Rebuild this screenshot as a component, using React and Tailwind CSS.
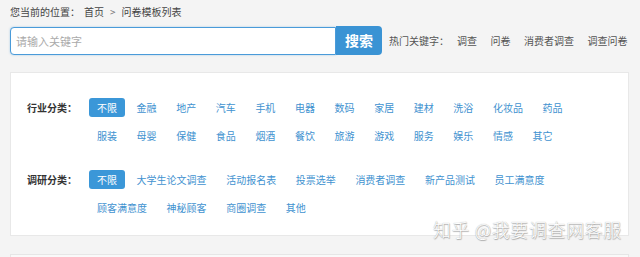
import React from "react";

const industry = [
  "金融", "地产", "汽车", "手机", "电器", "数码", "家居", "建材", "洗浴", "化妆品", "药品",
  "服装", "母婴", "保健", "食品", "烟酒", "餐饮", "旅游", "游戏", "服务", "娱乐", "情感", "其它",
];

const research = [
  "大学生论文调查", "活动报名表", "投票选举", "消费者调查", "新产品测试", "员工满意度",
  "顾客满意度", "神秘顾客", "商圈调查", "其他",
];

const hotWords = ["调查", "问卷", "消费者调查", "调查问卷"];

const FilterRow = ({ label, items, className = "" }) => (
  <div className={`flex items-start ${className}`}>
    <div className="w-[62px] shrink-0 h-[19px] leading-[19px] font-bold text-[#333]">
      {label}
    </div>
    <div className="flex-1 flex flex-wrap gap-x-[3.6px] gap-y-[9px]">
      <span className="h-[19px] leading-[19px] px-2 rounded-[3px] bg-[#3b97d8] text-white">
        不限
      </span>
      {items.map((item) => (
        <span key={item} className="h-[19px] leading-[19px] px-2 text-[#3f92d0] whitespace-nowrap">
          {item}
        </span>
      ))}
    </div>
  </div>
);

const App = () => {
  return (
    <div
      className="relative w-[640px] h-[257px] overflow-hidden bg-[#f4f4f4] px-[10px] text-[10px]"
      style={{ fontFamily: '"Noto Sans CJK SC", "Noto Sans", sans-serif' }}
    >
      {/* breadcrumb */}
      <div className="pt-[5px] h-[19px] leading-[14px] text-[#444] flex">
        <span>您当前的位置：</span>
        <span className="ml-[4px]">首页</span>
        <span className="mx-[6px] text-[#777]">&gt;</span>
        <span>问卷模板列表</span>
      </div>

      {/* search */}
      <div className="mt-[7px] flex items-center h-[29px]">
        <div className="w-[326px] h-[28px] mt-[1px] border-[1.5px] border-[#4a9bd9] rounded-l-[4px] bg-white flex items-center pl-[5px] text-[11px] text-[#aaa] shadow-[0_0_2px_rgba(74,155,217,0.5)]">
          请输入关键字
        </div>
        <button className="w-[46px] h-[29px] rounded-r-[4px] bg-[#3a93d4] text-white text-[14px] font-bold">
          搜索
        </button>
        <span className="ml-[7px] mr-[8px] text-[#555]">热门关键字：</span>
        <div className="flex gap-x-[13.5px] text-[#555]">
          {hotWords.map((w) => (
            <span key={w}>{w}</span>
          ))}
        </div>
      </div>

      {/* filter panel */}
      <div className="mt-[17px] w-[619px] h-[164px] bg-white border border-[#e8e8e8] pl-[16px] pr-[23px] pt-[25px]">
        <FilterRow label="行业分类：" items={industry} />
        <FilterRow label="调研分类：" items={research} className="mt-[25px]" />
      </div>

      {/* next panel edge */}
      <div className="mt-[18px] w-[619px] h-[20px] bg-[#f9f9f9] border border-[#e6e6e6]" />

      {/* watermark */}
      <div
        className="absolute left-[433px] top-[218px] text-[18px] leading-[22px] tracking-[0.6px] font-light text-white whitespace-nowrap"
        style={{ textShadow: "0 0 1px #999, 0.5px 0.5px 1px #aaa" }}
      >
        知乎 @我要调查网客服
      </div>
    </div>
  );
};

export default App;
